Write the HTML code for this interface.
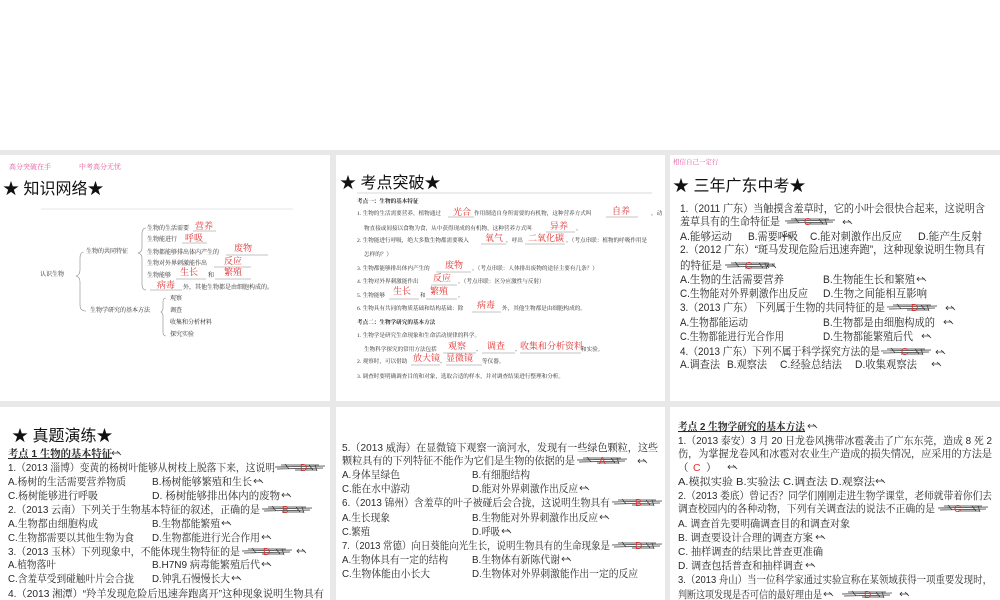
<!DOCTYPE html>
<html><head><meta charset="utf-8"><style>
html,body{margin:0;padding:0;background:#fff;}
svg{display:block;}
text{font-family:"Liberation Sans","Noto Serif CJK SC",serif;fill:#2a2a2a;}
.h{font-family:"Liberation Sans","Noto Sans CJK SC",sans-serif;fill:#111;}
.s{font-family:"Liberation Serif","Noto Serif CJK SC",serif;}
.r{fill:#e03030;}
.p{fill:#e0559a;}
</style></head><body>
<svg width="1000" height="600" viewBox="0 0 1000 600" xmlns="http://www.w3.org/2000/svg">
<defs>
<g id="sq"><path d="M0 0 L50 -1 M2 2 L48 1 M6 -2 L44 -2 M20 3 L42 3 M10 -3 L14 2 M34 -2 L38 3 M40 -2 L42 4" stroke="#333" stroke-width="0.7" fill="none"/></g>
<g id="ar"><path d="M0 0 L8 0 M2 -2 L0 0 L2 2 M5 -2 L9 2" stroke="#333" stroke-width="0.8" fill="none"/></g>
</defs>
<rect x="0" y="150" width="1000" height="450" fill="#e8e8e8"/>
<rect x="0" y="155" width="330" height="246" fill="#fff"/>
<rect x="336" y="155" width="329" height="246" fill="#fff"/>
<rect x="670" y="155" width="330" height="246" fill="#fff"/>
<rect x="0" y="407" width="330" height="193" fill="#fff"/>
<rect x="336" y="407" width="329" height="193" fill="#fff"/>
<rect x="670" y="407" width="330" height="193" fill="#fff"/>

<!-- Panel 1 -->
<text x="9" y="169" font-size="7" class="p s">高分突破在手</text>
<text x="79" y="169" font-size="7" class="p s">中考高分无忧</text>
<text x="3" y="194" font-size="16" class="h">★ 知识网络★</text>
<line x1="41" y1="209" x2="293" y2="209" stroke="#ddd" stroke-width="0.8"/>
<g class="s" font-size="6">
<text x="40" y="276" class="s">认识生物</text>
<text x="86" y="253" class="s">生物的共同特征</text>
<text x="90" y="312" class="s">生物学研究的基本方法</text>
<text x="147" y="230" class="s">生物的生活需要</text>
<text x="147" y="241" class="s">生物能进行</text>
<text x="147" y="254" class="s">生物都能够排出体内产生的</text>
<text x="147" y="265" class="s">生物对外界刺激能作出</text>
<text x="147" y="277" class="s">生物能够</text>
<text x="208" y="277" class="s">和</text>
<text x="183" y="289" class="s">外，其他生物都是由细胞构成的。</text>
<text x="170" y="300" class="s">观察</text>
<text x="170" y="312" class="s">调查</text>
<text x="170" y="324" class="s">收集和分析材料</text>
<text x="170" y="336" class="s">探究实验</text>
</g>
<g font-size="9" class="s">
<text x="195" y="229" class="r s">营养</text>
<text x="185" y="241" class="r s">呼吸</text>
<text x="234" y="251" class="r s">废物</text>
<text x="224" y="264" class="r s">反应</text>
<text x="180" y="275" class="r s">生长</text>
<text x="224" y="275" class="r s">繁殖</text>
<text x="157" y="288" class="r s">病毒</text>
</g>
<g stroke="#888" stroke-width="0.6" fill="none">
<path d="M193 231 H216 M182 243 H207 M226 255 H268 M214 267 H251 M176 279 H206 M215 279 H251 M150 290 H182"/>
<path d="M84 252 Q80 252 80 258 V270 Q80 275 76 276 Q80 277 80 282 V305 Q80 311 86 311"/>
<path d="M146 228 Q142 228 142 234 V248 Q142 252 138 253 Q142 254 142 258 V284 Q142 290 146 290"/>
<path d="M166 298 Q163 298 163 302 V308 Q163 311 161 312 Q163 313 163 316 V332 Q163 336 166 336"/>
</g>

<!-- Panel 2 -->
<text x="340" y="188" font-size="16" class="h">★ 考点突破★</text>
<line x1="357" y1="193" x2="652" y2="193" stroke="#ccc" stroke-width="0.8"/>
<g font-size="5.6" class="s">
<text x="357" y="203" font-weight="bold" class="s">考点一：生物的基本特征</text>
<text x="357" y="215" class="s">1. 生物的生活需要营养，植物通过</text>
<text x="474" y="215" class="s">作用制造自身所需要的有机物，这种营养方式叫</text>
<text x="651" y="215" class="s">，动</text>
<text x="364" y="230" class="s">物直接或间接以食物为食，从中获得现成的有机物，这种营养方式叫</text>
<text x="576" y="230" class="s">。</text>
<text x="357" y="242" class="s">2. 生物能进行呼吸，绝大多数生物都需要吸入</text>
<text x="506" y="242" class="s">，呼出</text>
<text x="566" y="242" class="s">。（考点串联：植物的呼吸作用是</text>
<text x="364" y="256" class="s">怎样的？）</text>
<text x="357" y="270" class="s">3. 生物都能够排出体内产生的</text>
<text x="472" y="270" class="s">。（考点串联：人体排出废物的途径主要有几条？）</text>
<text x="357" y="283" class="s">4. 生物对外界刺激能作出</text>
<text x="458" y="283" class="s">。（考点串联：区分应激性与反射）</text>
<text x="357" y="297" class="s">5. 生物能够</text>
<text x="420" y="297" class="s">和</text>
<text x="458" y="297" class="s">。</text>
<text x="357" y="310" class="s">6. 生物具有共同的物质基础和结构基础：除</text>
<text x="502" y="310" class="s">外，其他生物都是由细胞构成的。</text>
<text x="357" y="324" font-weight="bold" class="s">考点二：生物学研究的基本方法</text>
<text x="357" y="337" class="s">1. 生物学是研究生命现象和生命活动规律的科学。</text>
<text x="364" y="351" class="s">生物科学探究的常用方法包括</text>
<text x="476" y="351" class="s">、</text>
<text x="515" y="351" class="s">、</text>
<text x="581" y="351" class="s">和实验。</text>
<text x="357" y="363" class="s">2. 观察时，可以借助</text>
<text x="440" y="363" class="s">、</text>
<text x="482" y="363" class="s">等仪器。</text>
<text x="357" y="378" class="s">3. 调查时要明确调查目的和对象，选取合适的样本，并对调查结果进行整理和分析。</text>
</g>
<g stroke="#888" stroke-width="0.5" fill="none">
<path d="M448 217 H474 M606 217 H638 M546 232 H575 M481 244 H506 M525 244 H565 M436 272 H471 M431 285 H457 M389 299 H419 M426 299 H457 M472 312 H501 M443 353 H476 M482 353 H515 M520 353 H581 M411 365 H440 M446 365 H482"/>
</g>
<g font-size="9" class="s">
<text x="453" y="215" class="r s">光合</text>
<text x="612" y="214" class="r s">自养</text>
<text x="550" y="229" class="r s">异养</text>
<text x="485" y="241" class="r s">氧气</text>
<text x="528" y="241" class="r s">二氧化碳</text>
<text x="445" y="268" class="r s">废物</text>
<text x="433" y="281" class="r s">反应</text>
<text x="393" y="294" class="r s">生长</text>
<text x="430" y="294" class="r s">繁殖</text>
<text x="477" y="308" class="r s">病毒</text>
<text x="448" y="349" class="r s">观察</text>
<text x="487" y="349" class="r s">调查</text>
<text x="520" y="349" class="r s">收集和分析资料</text>
<text x="413" y="361" class="r s">放大镜</text>
<text x="446" y="361" class="r s">显微镜</text>
</g>

<!-- Panel 3 -->
<text x="673" y="164" font-size="6.5" class="p s">相信自己一定行</text>
<text x="673" y="191" font-size="16" class="h">★ 三年广东中考★</text>
<g font-size="11">
<text x="680" y="212" textLength="305" lengthAdjust="spacingAndGlyphs">1.（2011 广东）当触摸含羞草时，它的小叶会很快合起来，这说明含</text>
<text x="680" y="225" textLength="100" lengthAdjust="spacingAndGlyphs">羞草具有的生命特征是</text>
<text x="680" y="240" textLength="52" lengthAdjust="spacingAndGlyphs">A.能够运动</text><text x="748" y="240" textLength="50" lengthAdjust="spacingAndGlyphs">B.需要呼吸</text><text x="810" y="240" textLength="92" lengthAdjust="spacingAndGlyphs">C.能对刺激作出反应</text><text x="918" y="240" textLength="64" lengthAdjust="spacingAndGlyphs">D.能产生反射</text>
<text x="680" y="253" textLength="305" lengthAdjust="spacingAndGlyphs">2.（2012 广东）“斑马发现危险后迅速奔跑”，这种现象说明生物具有</text>
<text x="680" y="269" textLength="42" lengthAdjust="spacingAndGlyphs">的特征是</text>
<text x="680" y="283" textLength="104" lengthAdjust="spacingAndGlyphs">A.生物的生活需要营养</text><text x="823" y="283" textLength="92" lengthAdjust="spacingAndGlyphs">B.生物能生长和繁殖</text>
<text x="680" y="297" textLength="128" lengthAdjust="spacingAndGlyphs">C.生物能对外界刺激作出反应</text><text x="823" y="297" textLength="104" lengthAdjust="spacingAndGlyphs">D.生物之间能相互影响</text>
<text x="680" y="311" textLength="205" lengthAdjust="spacingAndGlyphs">3.（2013 广东） 下列属于生物的共同特征的是</text>
<text x="680" y="326" textLength="68" lengthAdjust="spacingAndGlyphs">A.生物都能运动</text><text x="823" y="326" textLength="112" lengthAdjust="spacingAndGlyphs">B.生物都是由细胞构成的</text>
<text x="680" y="340" textLength="104" lengthAdjust="spacingAndGlyphs">C.生物都能进行光合作用</text><text x="823" y="340" textLength="90" lengthAdjust="spacingAndGlyphs">D.生物都能繁殖后代</text>
<text x="680" y="355" textLength="200" lengthAdjust="spacingAndGlyphs">4.（2013 广东）下列不属于科学探究方法的是</text>
<text x="680" y="368" textLength="40" lengthAdjust="spacingAndGlyphs">A.调查法</text><text x="727" y="368" textLength="40" lengthAdjust="spacingAndGlyphs">B.观察法</text><text x="780" y="368" textLength="62" lengthAdjust="spacingAndGlyphs">C.经验总结法</text><text x="855" y="368" textLength="62" lengthAdjust="spacingAndGlyphs">D.收集观察法</text>
</g>
<use href="#sq" x="785" y="221"/><text x="804" y="225" font-size="10" class="r">C</text><use href="#ar" x="843" y="222"/>
<use href="#sq" x="725" y="265"/><text x="745" y="269" font-size="10" class="r">C</text><use href="#ar" x="767" y="266"/>
<use href="#sq" x="887" y="307"/><text x="911" y="311" font-size="10" class="r">D</text><use href="#ar" x="946" y="308"/>
<use href="#sq" x="881" y="351"/><text x="901" y="355" font-size="10" class="r">C</text><use href="#ar" x="936" y="352"/>
<use href="#ar" x="783" y="236"/><use href="#ar" x="917" y="279"/><use href="#ar" x="944" y="322"/><use href="#ar" x="922" y="336"/><use href="#ar" x="932" y="364"/>

<!-- Row 2 Panel 1 -->
<text x="12" y="441" font-size="16" class="h">★ 真题演练★</text>
<g font-size="10.5">
<text x="8" y="457" font-weight="bold" text-decoration="underline" textLength="104" lengthAdjust="spacingAndGlyphs">考点 1 生物的基本特征</text>
<text x="8" y="471" textLength="267" lengthAdjust="spacingAndGlyphs">1.（2013 淄博）变黄的杨树叶能够从树枝上脱落下来，这说明</text>
<text x="8" y="485" textLength="118" lengthAdjust="spacingAndGlyphs">A.杨树的生活需要营养物质</text><text x="152" y="485" textLength="100" lengthAdjust="spacingAndGlyphs">B.杨树能够繁殖和生长</text>
<text x="8" y="499" textLength="90" lengthAdjust="spacingAndGlyphs">C.杨树能够进行呼吸</text><text x="152" y="499" textLength="128" lengthAdjust="spacingAndGlyphs">D.  杨树能够排出体内的废物</text>
<text x="8" y="513" textLength="252" lengthAdjust="spacingAndGlyphs">2.（2013 云南）下列关于生物基本特征的叙述，正确的是</text>
<text x="8" y="527" textLength="90" lengthAdjust="spacingAndGlyphs">A.生物都由细胞构成</text><text x="152" y="527" textLength="68" lengthAdjust="spacingAndGlyphs">B.生物都能繁殖</text>
<text x="8" y="541" textLength="126" lengthAdjust="spacingAndGlyphs">C.生物都需要以其他生物为食</text><text x="152" y="541" textLength="108" lengthAdjust="spacingAndGlyphs">D.生物都能进行光合作用</text>
<text x="8" y="555" textLength="232" lengthAdjust="spacingAndGlyphs">3.（2013 玉林）下列现象中，不能体现生物特征的是</text>
<text x="8" y="568" textLength="48" lengthAdjust="spacingAndGlyphs">A.植物落叶</text><text x="152" y="568" textLength="108" lengthAdjust="spacingAndGlyphs">B.H7N9 病毒能繁殖后代</text>
<text x="8" y="582" textLength="126" lengthAdjust="spacingAndGlyphs">C.含羞草受到碰触叶片会合拢</text><text x="152" y="582" textLength="78" lengthAdjust="spacingAndGlyphs">D.钟乳石慢慢长大</text>
<text x="8" y="597" textLength="316" lengthAdjust="spacingAndGlyphs">4.（2013 湘潭）“羚羊发现危险后迅速奔跑离开”这种现象说明生物具有</text>
</g>
<use href="#ar" x="112" y="453"/>
<use href="#sq" x="275" y="467"/><text x="300" y="471" font-size="10" class="r">D</text>
<use href="#sq" x="262" y="509"/><text x="282" y="513" font-size="10" class="r">B</text>
<use href="#sq" x="242" y="551"/><text x="263" y="555" font-size="10" class="r">D</text><use href="#ar" x="297" y="551"/>
<use href="#ar" x="254" y="481"/><use href="#ar" x="282" y="495"/><use href="#ar" x="222" y="523"/><use href="#ar" x="262" y="537"/><use href="#ar" x="262" y="564"/><use href="#ar" x="232" y="578"/>

<!-- Row 2 Panel 2 -->
<g font-size="10.5">
<text x="342" y="451" textLength="316" lengthAdjust="spacingAndGlyphs">5.（2013 威海）在显微镜下观察一滴河水，发现有一些绿色颗粒，这些</text>
<text x="342" y="464" textLength="233" lengthAdjust="spacingAndGlyphs">颗粒具有的下列特征不能作为它们是生物的依据的是</text>
<text x="342" y="478" textLength="58" lengthAdjust="spacingAndGlyphs">A.身体呈绿色</text><text x="472" y="478" textLength="58" lengthAdjust="spacingAndGlyphs">B.有细胞结构</text>
<text x="342" y="492" textLength="68" lengthAdjust="spacingAndGlyphs">C.能在水中游动</text><text x="472" y="492" textLength="106" lengthAdjust="spacingAndGlyphs">D.能对外界刺激作出反应</text>
<text x="342" y="506" textLength="268" lengthAdjust="spacingAndGlyphs">6.（2013 锦州）含羞草的叶子被碰后会合拢，这说明生物具有</text>
<text x="342" y="521" textLength="48" lengthAdjust="spacingAndGlyphs">A.生长现象</text><text x="472" y="521" textLength="126" lengthAdjust="spacingAndGlyphs">B.生物能对外界刺激作出反应</text>
<text x="342" y="535" textLength="28" lengthAdjust="spacingAndGlyphs">C.繁殖</text><text x="472" y="535" textLength="28" lengthAdjust="spacingAndGlyphs">D.呼吸</text>
<text x="342" y="549" textLength="268" lengthAdjust="spacingAndGlyphs">7.（2013 常德）向日葵能向光生长，说明生物具有的生命现象是</text>
<text x="342" y="563" textLength="106" lengthAdjust="spacingAndGlyphs">A.生物体具有一定的结构</text><text x="472" y="563" textLength="88" lengthAdjust="spacingAndGlyphs">B.生物体有新陈代谢</text>
<text x="342" y="577" textLength="88" lengthAdjust="spacingAndGlyphs">C.生物体能由小长大</text><text x="472" y="577" textLength="166" lengthAdjust="spacingAndGlyphs">D.生物体对外界刺激能作出一定的反应</text>
</g>
<use href="#sq" x="577" y="460"/><text x="599" y="464" font-size="10" class="r">A</text><use href="#ar" x="638" y="461"/>
<use href="#sq" x="612" y="502"/><text x="635" y="506" font-size="10" class="r">B</text>
<use href="#sq" x="612" y="545"/><text x="635" y="549" font-size="10" class="r">D</text>
<use href="#ar" x="580" y="488"/><use href="#ar" x="600" y="517"/><use href="#ar" x="502" y="531"/><use href="#ar" x="562" y="559"/>

<!-- Row 2 Panel 3 -->
<g font-size="10.5">
<text x="678" y="430" font-weight="bold" text-decoration="underline" textLength="127" lengthAdjust="spacingAndGlyphs">考点 2 生物学研究的基本方法</text>
<text x="678" y="444" textLength="314" lengthAdjust="spacingAndGlyphs">1.（2013 泰安）3 月 20 日龙卷风携带冰雹袭击了广东东莞，造成 8 死 2</text>
<text x="678" y="457" textLength="314" lengthAdjust="spacingAndGlyphs">伤，为掌握龙卷风和冰雹对农业生产造成的损失情况，应采用的方法是</text>
<text x="678" y="471">（ </text><text x="693" y="471" class="r">C</text><text x="706" y="471">）</text>
<text x="678" y="485" textLength="197" lengthAdjust="spacingAndGlyphs">A.模拟实验   B.实验法   C.调查法   D.观察法</text>
<text x="678" y="499" textLength="314" lengthAdjust="spacingAndGlyphs">2.（2013 娄底）曾记否？同学们刚刚走进生物学课堂，老师就带着你们去</text>
<text x="678" y="512" textLength="257" lengthAdjust="spacingAndGlyphs">调查校园内的各种动物，下列有关调查法的说法不正确的是</text>
<text x="678" y="527" textLength="172" lengthAdjust="spacingAndGlyphs">A.  调查首先要明确调查目的和调查对象</text>
<text x="678" y="541" textLength="135" lengthAdjust="spacingAndGlyphs">B.  调查要设计合理的调查方案</text>
<text x="678" y="555" textLength="145" lengthAdjust="spacingAndGlyphs">C.  抽样调查的结果比普查更准确</text>
<text x="678" y="569" textLength="125" lengthAdjust="spacingAndGlyphs">D.  调查包括普查和抽样调查</text>
<text x="678" y="583" textLength="314" lengthAdjust="spacingAndGlyphs">3.（2013 舟山）当一位科学家通过实验宣称在某领域获得一项重要发现时，</text>
<text x="678" y="598" textLength="144" lengthAdjust="spacingAndGlyphs">判断这项发现是否可信的最好理由是</text>
</g>
<use href="#ar" x="808" y="426"/><use href="#ar" x="728" y="467"/><use href="#ar" x="876" y="481"/>
<use href="#sq" x="938" y="508"/><text x="954" y="512" font-size="10" class="r">C</text>
<use href="#ar" x="816" y="537"/><use href="#ar" x="806" y="565"/><use href="#ar" x="824" y="594"/>
<use href="#sq" x="842" y="594"/><text x="864" y="598" font-size="10" class="r">D</text><use href="#ar" x="900" y="594"/>
</svg>
</body></html>
